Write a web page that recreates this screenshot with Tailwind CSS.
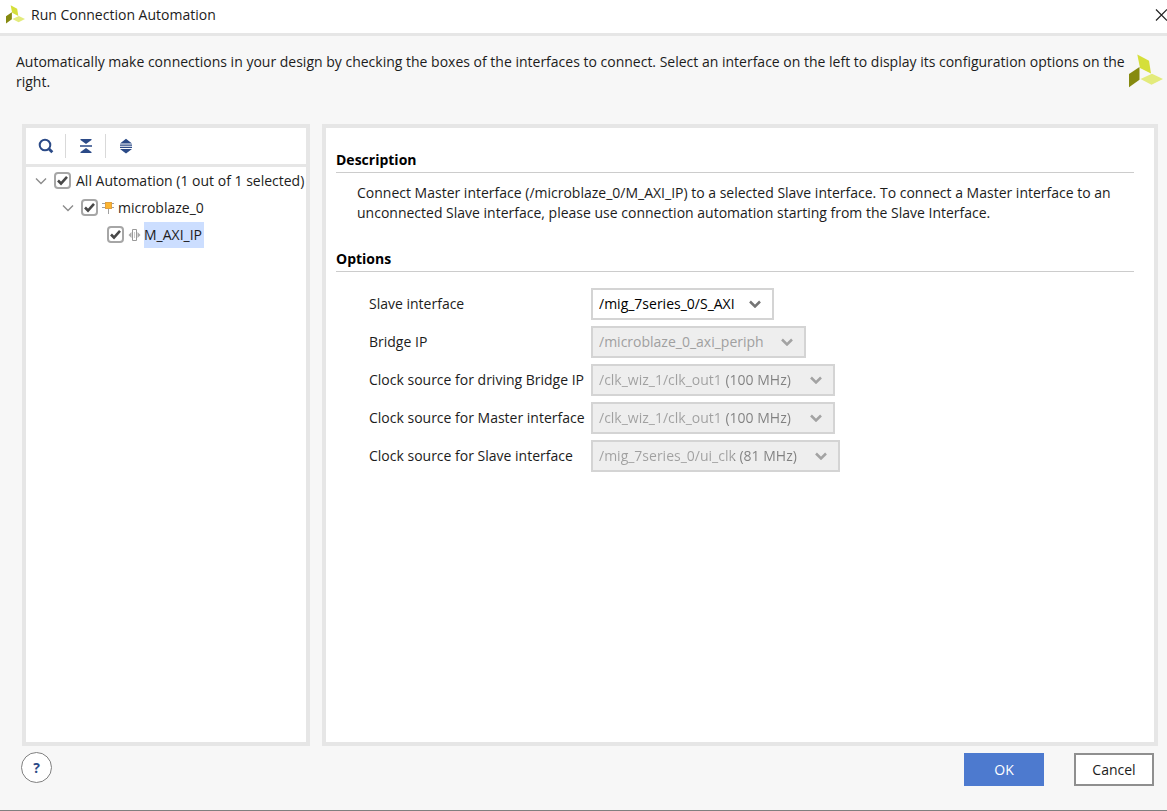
<!DOCTYPE html>
<html lang="en">
<head>
<meta charset="utf-8">
<meta name="viewport" content="width=device-width, initial-scale=1">
<title>Run Connection Automation</title>
<script src="https://cdn.jsdelivr.net/npm/@tailwindcss/browser@4"></script>
</head>
<body class="flex h-screen flex-col overflow-hidden border-b border-[#808080] bg-[#f7f7f7] font-['Open_Sans','Noto_Sans',sans-serif] text-[14px] leading-5 text-[#1c1c1c]">
<svg class="hidden">
  <symbol id="logo" viewBox="0 0 34 34">
    <path d="M8.300 .5 20 6.700 22 19.500 11 14Z" fill="#d5df3a"/>
    <path d="M0 20 10.500 13V25.700L0 33.300Z" fill="#868a10"/>
    <path d="M11.500 25 23 19.700 34 25 22.500 30.700Z" fill="#e3eb7c"/>
  </symbol>
  <symbol id="chevron" viewBox="0 0 12 8"><path d="M1 1.500 6 6.500 11 1.500" fill="none" stroke="currentColor"/></symbol>
  <symbol id="tick" viewBox="0 0 17 17"><path d="M4 8.500 7 11.500 13 4.800" fill="none" stroke="#484848" stroke-width="2.600"/></symbol>
</svg>

<header class="flex h-9 shrink-0 items-center justify-between border-b-3 border-[#e6e6e6] bg-white pb-1 pl-1.5">
  <div class="flex items-center gap-1.5">
    <svg class="size-[19px]"><use href="#logo"/></svg>
    <h1>Run Connection Automation</h1>
  </div>
  <button type="button" aria-label="Close" class="w-3 overflow-hidden"><svg class="h-3 w-[13px]" viewBox="0 0 13 12"><path d="M1 .5 12 11.500M12 .5 1 11.500" stroke="#222" stroke-width="1.200"/></svg></button>
</header>

<div class="flex h-[88px] shrink-0 justify-between pt-4 pl-4 pr-1">
  <p class="flex-1">Automatically make connections in your design by checking the boxes of the interfaces to connect. Select an interface on the left to display its configuration options on the right.</p>
  <svg class="mt-0.5 size-[34px] shrink-0"><use href="#logo"/></svg>
</div>

<main class="flex min-h-0 flex-1 gap-3 pl-[22px] pr-[9px]">
  <section class="flex w-72 shrink-0 flex-col border-4 border-[#e6e6e6] bg-white" aria-label="Automation">
    <div class="flex h-[39px] shrink-0 items-center border-b-3 border-[#e6e6e6] text-[#2b4a87]">
      <button type="button" aria-label="Search" class="flex h-6 w-10 items-center justify-center border-r border-[#d9d9d9]">
        <svg class="size-4" viewBox="0 0 16 16" fill="none" stroke="currentColor"><circle cx="7" cy="7" r="5.300" stroke-width="2"/><path d="M10.800 10.800 14.300 14.300" stroke-width="2.800"/></svg>
      </button>
      <button type="button" aria-label="Collapse all" class="flex h-6 w-10 items-center justify-center border-r border-[#d9d9d9]">
        <svg class="size-4" viewBox="0 0 16 16" fill="currentColor"><path d="M2.500 1h11v1L8 6 2.500 2ZM2 7.200h12v1.600H2ZM2.500 15h11v-1L8 10 2.500 14Z"/></svg>
      </button>
      <button type="button" aria-label="Expand all" class="flex h-6 w-10 items-center justify-center">
        <svg class="size-4" viewBox="0 0 16 16" fill="currentColor"><path d="M2 5.500 8 .8 14 5.500ZM2 6.500h12v1.200H2ZM2 8.800h12v1.200H2ZM2 11h12L8 15.400Z"/></svg>
      </button>
    </div>
    <ul class="whitespace-nowrap">
      <li class="flex h-[27px] items-center pl-[9px]">
        <svg class="mr-[7px] h-2 w-3 stroke-[1.4] text-[#8c8c8c]"><use href="#chevron"/></svg>
        <span class="mr-[5px] grid size-[17px]"><input id="all" type="checkbox" checked class="col-start-1 row-start-1 size-[17px] appearance-none rounded-[4px] border-2 border-[#a6a6a6] bg-white"><svg class="pointer-events-none col-start-1 row-start-1 size-[17px]"><use href="#tick"/></svg></span>
        <label for="all">All Automation (1 out of 1 selected)</label>
      </li>
      <li class="flex h-[27px] items-center pl-9">
        <svg class="mr-[7px] h-2 w-3 stroke-[1.4] text-[#8c8c8c]"><use href="#chevron"/></svg>
        <span class="mr-1 grid size-[17px]"><input id="mb" type="checkbox" checked class="col-start-1 row-start-1 size-[17px] appearance-none rounded-[4px] border-2 border-[#a6a6a6] bg-white"><svg class="pointer-events-none col-start-1 row-start-1 size-[17px]"><use href="#tick"/></svg></span>
        <svg class="mr-1 h-[14px] w-3" viewBox="0 0 12 14"><path d="M0 2.500h12M0 6.500h12M6.500 8v5" stroke="#a0a0a0"/><path d="M3 1h7v7H3Z" fill="#e0a040"/><path d="M4 2h5v5H4Z" fill="#fdb52f"/></svg>
        <label for="mb">microblaze_0</label>
      </li>
      <li class="flex h-[27px] items-center pl-[81px]">
        <span class="mr-1 grid size-[17px]"><input id="axi" type="checkbox" checked class="col-start-1 row-start-1 size-[17px] appearance-none rounded-[4px] border-2 border-[#a6a6a6] bg-white"><svg class="pointer-events-none col-start-1 row-start-1 size-[17px]"><use href="#tick"/></svg></span>
        <svg class="mr-[3px] h-[14px] w-[13px]" viewBox="0 0 13 14"><path d="M4.500 1.500h4v11h-4Z" fill="none" stroke="#999"/><path d="M6.500 4v6" stroke="#ccc"/><path d="M3.500 4v6L.5 7ZM9.500 4v6l3-3Z" fill="#aaa"/></svg>
        <label for="axi" class="bg-[#ccdeff] py-[3px] pr-0.5">M_AXI_IP</label>
      </li>
    </ul>
  </section>

  <section class="min-w-0 flex-1 border-4 border-[#e6e6e6] bg-white pl-2.5 pr-5 pt-[22px]">
    <h2 class="border-b border-[#cccccc] pb-0.5 font-bold text-black">Description</h2>
    <p class="max-w-[780px] pt-2.5 pl-[21px]">Connect Master interface (/microblaze_0/M_AXI_IP) to a selected Slave interface. To connect a Master interface to an unconnected Slave interface, please use connection automation starting from the Slave Interface.</p>
    <h2 class="mt-[26px] border-b border-[#cccccc] pb-0.5 font-bold text-black">Options</h2>
    <div class="grid grid-cols-[222px_1fr] items-center gap-y-1.5 pt-4 pl-[33px]">
      <label for="slave">Slave interface</label>
      <div class="grid h-8 w-[183px] items-center border-2 border-[#d4d4d4] bg-white"><select id="slave" class="col-start-1 row-start-1 w-full appearance-none pl-1.5 text-black"><option>/mig_7series_0/S_AXI</option></select><svg class="pointer-events-none col-start-1 row-start-1 mr-[11px] h-2 w-3 justify-self-end stroke-[2.5] text-[#757575]"><use href="#chevron"/></svg></div>
      <label for="bridge">Bridge IP</label>
      <div class="grid h-8 w-[215px] items-center border-2 border-[#d4d4d4] bg-[#eeeeee]"><select id="bridge" disabled class="col-start-1 row-start-1 w-full appearance-none pl-1.5 text-[#a0a0a0] opacity-100"><option>/microblaze_0_axi_periph</option></select><svg class="pointer-events-none col-start-1 row-start-1 mr-[11px] h-2 w-3 justify-self-end stroke-[2.5] text-[#a3a3a3]"><use href="#chevron"/></svg></div>
      <label for="clkbridge">Clock source for driving Bridge IP</label>
      <div class="grid h-8 w-[244px] items-center border-2 border-[#d4d4d4] bg-[#eeeeee]"><select id="clkbridge" disabled class="col-start-1 row-start-1 w-full appearance-none bg-linear-to-r from-[#a0a0a0] from-[129px] to-[#808080] to-[129px] bg-clip-text pl-1.5 text-transparent opacity-100"><option>/clk_wiz_1/clk_out1 (100 MHz)</option></select><svg class="pointer-events-none col-start-1 row-start-1 mr-[11px] h-2 w-3 justify-self-end stroke-[2.5] text-[#a3a3a3]"><use href="#chevron"/></svg></div>
      <label for="clkmaster">Clock source for Master interface</label>
      <div class="grid h-8 w-[244px] items-center border-2 border-[#d4d4d4] bg-[#eeeeee]"><select id="clkmaster" disabled class="col-start-1 row-start-1 w-full appearance-none bg-linear-to-r from-[#a0a0a0] from-[129px] to-[#808080] to-[129px] bg-clip-text pl-1.5 text-transparent opacity-100"><option>/clk_wiz_1/clk_out1 (100 MHz)</option></select><svg class="pointer-events-none col-start-1 row-start-1 mr-[11px] h-2 w-3 justify-self-end stroke-[2.5] text-[#a3a3a3]"><use href="#chevron"/></svg></div>
      <label for="clkslave">Clock source for Slave interface</label>
      <div class="grid h-8 w-[249px] items-center border-2 border-[#d4d4d4] bg-[#eeeeee]"><select id="clkslave" disabled class="col-start-1 row-start-1 w-full appearance-none bg-linear-to-r from-[#a0a0a0] from-[141px] to-[#808080] to-[141px] bg-clip-text pl-1.5 text-transparent opacity-100"><option>/mig_7series_0/ui_clk (81 MHz)</option></select><svg class="pointer-events-none col-start-1 row-start-1 mr-[11px] h-2 w-3 justify-self-end stroke-[2.5] text-[#a3a3a3]"><use href="#chevron"/></svg></div>
    </div>
  </section>
</main>

<footer class="flex h-16 shrink-0 items-start justify-between pt-1.5 pl-[21px] pr-[13px]">
  <button type="button" aria-label="Help" class="size-[31px] rounded-full border border-[#808080] bg-white font-bold text-[#2b4a87]">?</button>
  <div class="flex gap-[30px] pt-px">
    <button type="button" class="h-[33px] w-20 bg-[#4d7acf] text-white">OK</button>
    <button type="button" class="h-[33px] w-20 border-2 border-[#8f8f8f] bg-white">Cancel</button>
  </div>
</footer>
</body>
</html>
